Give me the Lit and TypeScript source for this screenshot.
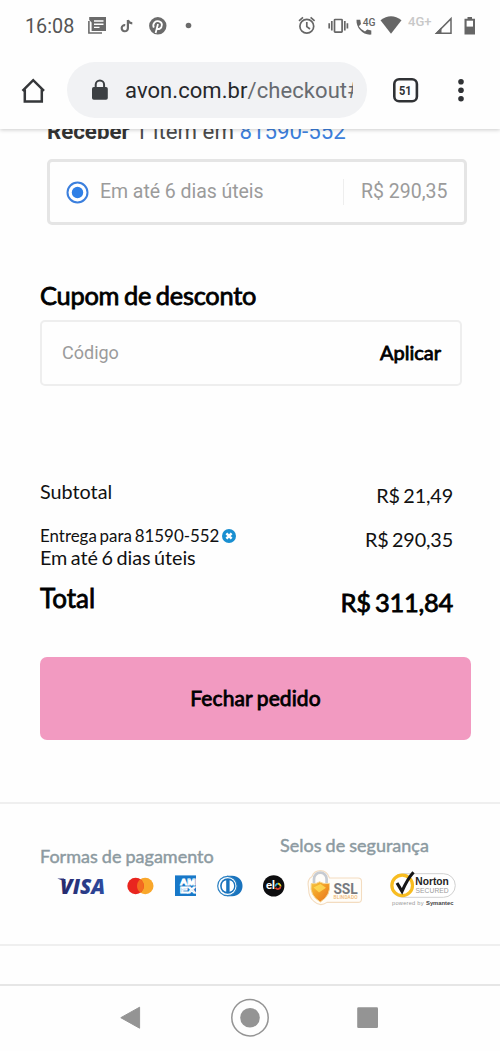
import { LitElement, html, css } from "lit";
import { customElement } from "lit/decorators.js";

@customElement("status-bar")
class StatusBar extends LitElement {
  static styles = css`
    :host { display: block; height: 52px; }
    .bar { display: flex; height: 52px; justify-content: space-between; align-items: center; }
    .clock { font: 400 19.8px/24px Roboto, sans-serif; color: #555; padding: 2px 0 0 25px; width: 57px; white-space: nowrap; }
    .left { display: flex; align-items: center; height: 52px; }
    svg { display: block; }
  `;
  render() {
    return html`<div class="bar">
      <div class="left">
        <span class="clock">16:08</span>
        <svg width="120" height="52" viewBox="82 0 120 52" fill="#6b6b6b">
          <path d="M91.6 17H106V31H91.6V22.4L89.2 20V17Z" />
          <path d="M88.9 21V33H102" fill="none" stroke="#6b6b6b" stroke-width="1.6" />
          <path d="M94 21H103.5M94 24.2H103.5M94 27.4H99.5" stroke="#fff" stroke-width="1.4" />
          <path d="M127.9 20V28.2A3.1 3.1 0 1 1 125.2 25.1M127.9 20Q128.8 23.2 132.3 23.4" fill="none" stroke="#6b6b6b" stroke-width="2.2" />
          <circle cx="157.8" cy="25.8" r="8.7" />
          <path d="M153.8 27.6Q152.4 24.5 154.6 22.3C157 20.1 161.8 21 161.9 24.8C161.8 28.6 158.3 30.2 156.7 28M158 24L155.6 33" fill="none" stroke="#fff" stroke-width="1.8" />
          <circle cx="188.5" cy="25.5" r="2.8" />
        </svg>
      </div>
      <svg width="210" height="52" viewBox="290 0 210 52" fill="#666">
        <g fill="none" stroke="#666" stroke-width="1.7">
          <circle cx="306.8" cy="26.2" r="6.9" />
          <path d="M306.8 22V26.6L310 29M299 20.8L303 17.4M314.6 20.8L310.6 17.4" />
          <rect x="334.5" y="19.5" width="7.6" height="12.6" rx=".6" />
          <path d="M331.8 21V30.6M329.2 23.2V28.4M344.8 21V30.6M347.4 23.2V28.4" />
        </g>
        <path d="M356.5 19.8H360.2L361 24L358.8 26.2Q361 29.8 365 31.6L367.2 29.6L371.3 30.6V34.6C363 35.4 356 28 356.5 19.8Z" />
        <text x="362.8" y="25.8" font-family="Roboto" font-weight="500" font-size="11.5" textLength="12.8" lengthAdjust="spacingAndGlyphs">4G</text>
        <path d="M380.5 20.2Q391 12.4 401.5 20.2L391 33.8Z" />
        <text x="408" y="25.8" font-family="Roboto" font-weight="500" font-size="12" fill="#c8c8c8" textLength="23.5" lengthAdjust="spacingAndGlyphs">4G+</text>
        <path d="M436.5 33.2H451V18.6Z" fill="none" stroke="#666" stroke-width="1.5" />
        <path d="M435 34L441.5 27.2V34Z" />
        <path d="M467.5 17H472V18.8H475V34.5H464.5V18.8H467.5Z" />
        <path d="M466.6 20.7H473V26.6H466.6Z" fill="#fff" />
      </svg>
    </div>`;
  }
}

@customElement("browser-bar")
class BrowserBar extends LitElement {
  static styles = css`
    :host { display: block; }
    .bar { display: flex; height: 77px; padding-top: 10px; box-sizing: border-box; align-items: flex-start; }
    svg { display: block; flex: none; }
    .url { display: flex; width: 300px; height: 56px; border-radius: 28px; background: #f1f2f4; align-items: center; padding-left: 24px; box-sizing: border-box; }
    .address { width: 228px; margin-left: 16px; overflow: hidden; white-space: nowrap; font: 22px/30px Roboto, sans-serif; padding-top: 2px; letter-spacing: .07px; color: #26282b; }
    .path { color: #676b70; }
  `;
  render() {
    return html`<div class="bar">
      <svg width="67" height="56" viewBox="0 62 67 56">
        <path d="M22.5 90.8L33.2 80.2L44 90.8M24.8 89.4V101.5H41.8V89.4" fill="none" stroke="#35373a" stroke-width="2.5" />
      </svg>
      <div class="url">
        <svg width="18" height="56" viewBox="91 62 18 56">
          <rect x="92" y="87" width="15.8" height="12.8" rx="1.8" fill="#3c4043" />
          <path d="M95.7 88V84.7A4.2 4.2 0 0 1 104.1 84.7V88" fill="none" stroke="#3c4043" stroke-width="2" />
        </svg>
        <div class="address">avon.com.br<span class="path">/checkout#</span></div>
      </div>
      <svg width="133" height="56" viewBox="367 62 133 56" fill="#303235">
        <rect x="394.3" y="79.3" width="22.6" height="21.9" rx="4.8" fill="none" stroke="#303235" stroke-width="2.6" />
        <text x="399" y="95" font-family="Roboto" font-weight="700" font-size="13.5" textLength="12.6" lengthAdjust="spacingAndGlyphs">51</text>
        <circle cx="461" cy="81.8" r="2.8" /><circle cx="461" cy="90.3" r="2.8" /><circle cx="461" cy="98.7" r="2.8" />
      </svg>
    </div>`;
  }
}

@customElement("payment-marks")
class PaymentMarks extends LitElement {
  static styles = css`
    :host { display: block; }
    svg { display: block; }
  `;
  render() {
    return html`<svg width="260" height="40" viewBox="40 866 260 40">
      <defs><linearGradient id="v" x2="1"><stop stop-color="#26286b" /><stop offset="1" stop-color="#2d4ba0" /></linearGradient></defs>
      <text x="60" y="893.6" font-family="Open Sans" font-weight="800" font-style="italic" font-size="21" fill="url(#v)" textLength="45" lengthAdjust="spacingAndGlyphs">VISA</text>
      <path d="M57.3 878.6H64L66 883.6Q62 879.8 57.3 878.6Z" fill="#2b2d75" />
      <circle cx="145.2" cy="886" r="8.3" fill="#f9a72b" />
      <circle cx="135.6" cy="886" r="8.3" fill="#e9251f" />
      <path d="M140.4 879.3A8.3 8.3 0 0 1 140.4 892.7A8.3 8.3 0 0 1 140.4 879.3Z" fill="#f36b20" />
      <rect x="175" y="875.4" width="21" height="20.6" fill="#1878c8" />
      <g font-family="Liberation Sans" font-weight="700" font-size="8.4" fill="none" stroke="#fff" stroke-width=".9">
        <text x="180" y="885" textLength="15.5" lengthAdjust="spacingAndGlyphs">AM</text>
        <text x="180" y="893.2" textLength="15.5" lengthAdjust="spacingAndGlyphs">EX</text>
      </g>
      <path d="M227 875.7H232C246 875.7 246 896.2 232 896.2H227Z" fill="#1973bd" />
      <circle cx="227.4" cy="886" r="9.7" fill="#fff" stroke="#2b80c2" stroke-width="1.2" />
      <circle cx="227.8" cy="886" r="7.7" fill="#1973bd" />
      <path d="M226.2 880.2A6 6 0 0 0 226.2 891.8ZM229.6 880.2A6 6 0 0 1 229.6 891.8Z" fill="#fff" />
      <circle cx="273.7" cy="885.9" r="10.7" fill="#0d0d0f" />
      <text x="266" y="889.4" font-family="Lato" font-weight="900" font-size="10.5" fill="#fff" textLength="9" lengthAdjust="spacingAndGlyphs">el</text>
      <g fill="none" stroke-width="1.7"><path d="M275.4 886.5A2.7 2.7 0 0 1 278 883.7" stroke="#31a7dd" /><path d="M278 883.7A2.7 2.7 0 0 1 280.6 886.5" stroke="#eadb27" /><path d="M280.6 886.5A2.7 2.7 0 0 1 275.6 887.7" stroke="#dc4131" /></g>
    </svg>`;
  }
}

@customElement("security-marks")
class SecurityMarks extends LitElement {
  static styles = css`
    :host { display: block; }
    svg { display: block; }
  `;
  render() {
    return html`<svg width="200" height="44" viewBox="300 866 200 44">
      <defs><linearGradient id="s" x2="1" y2="1"><stop stop-color="#f6c840" /><stop offset=".5" stop-color="#f29a25" /><stop offset="1" stop-color="#e5701d" /></linearGradient></defs>
      <path d="M308.6 889.5Q306.5 880.5 312 877.5Q314 871.6 320.5 871.6Q327 871.6 329.5 879H358Q361.5 879 361.5 882.5V900Q361.5 903.4 358 903.4H327Q320 908.4 314 902.4Q308.6 898.4 308.6 889.5Z" fill="#fffdf9" stroke="#f3dcc0" stroke-width="1.1" />
      <path d="M314 885.6V880A6.3 6.3 0 0 1 326.6 880V885.6" fill="none" stroke="#c6cbd2" stroke-width="2.7" />
      <path d="M311.2 884.6Q316 885.6 319.5 882.8Q324 885.6 329.4 884.4Q331.2 896.4 320.3 903Q309.2 896.4 311.2 884.6Z" fill="url(#s)" stroke="#f6d692" />
      <path d="M313.5 888.6L320.5 884.9L326 888.8L319 893.6Z" fill="#ffe35b" opacity=".75" />
      <text x="333.4" y="894.8" font-family="Roboto" font-weight="700" font-size="15" fill="#777a7f" textLength="24.4" lengthAdjust="spacingAndGlyphs">SSL</text>
      <text x="333.5" y="900.4" font-family="Roboto" font-weight="500" font-size="4.8" fill="#efb873" textLength="24">BLINDADO</text>
      <rect x="391" y="874.7" width="64.3" height="23.6" rx="11.8" fill="#fff" stroke="#d1d1d1" stroke-width="1" />
      <circle cx="402.2" cy="886.4" r="10.3" fill="#fff" stroke="#f8bd21" stroke-width="3.2" />
      <path d="M397 884L402 892.4Q407.5 879.8 413.5 873.3" fill="none" stroke="#171717" stroke-width="3.1" />
      <text x="415.3" y="886.4" font-family="Liberation Sans" font-weight="700" font-size="10.5" fill="#242424" textLength="33.5" lengthAdjust="spacingAndGlyphs">Norton</text>
      <text x="415.5" y="893.9" font-family="Liberation Sans" font-size="6.7" fill="#9b9b9b" textLength="33.2">SECURED</text>
      <text x="392" y="905.6" font-family="Liberation Sans" font-size="5.7" fill="#999" textLength="31.5">powered by</text>
      <text x="426" y="905.6" font-family="Liberation Sans" font-weight="700" font-size="5.7" fill="#444" textLength="27.5" lengthAdjust="spacingAndGlyphs">Symantec</text>
    </svg>`;
  }
}

@customElement("app-root")
class AppRoot extends LitElement {
  static styles = css`
    :host { display: block; width: 500px; height: 1051px; overflow: hidden; background: #fefefe; font-family: Lato, sans-serif; color: #111; }
    .page { display: flex; flex-direction: column; height: 1051px; }
    .chrome { flex: none; height: 129px; background: #fefefe; box-shadow: 0 1px 4px rgba(0,0,0,.2); position: relative; z-index: 1; }
    main { flex: none; height: 855px; overflow: hidden; white-space: nowrap; }
    .receive { margin: -12px 0 0 47px; height: 28px; font: 22.25px/28px Roboto, sans-serif; color: #4a4a4a; }
    .receive b { color: #333; }
    .receive a { color: #3c7edb; }
    .option { margin: 14px 33px 0 47px; height: 66px; box-sizing: border-box; border: 3px solid #e5e5e5; border-radius: 5px; display: flex; align-items: center; font: 19.5px/60px Roboto, sans-serif; color: #9b9b9b; padding-left: 15px; }
    .radio { width: 25px; height: 25px; flex: none; margin-right: 10px; }
    .eta { width: 243px; letter-spacing: -.05px; }
    .price { border-left: 1px solid #eee; height: 26px; line-height: 26px; padding-left: 17px; }
    h2 { margin: 57px 0 0 40px; height: 27px; font-size: 25.4px; line-height: 27px; font-weight: 400; letter-spacing: -.25px; word-spacing: -1.5px; }
    .strong { -webkit-text-stroke: .8px #000; color: #000; }
    .coupon { margin: 11px 38px 0 40px; height: 66px; box-sizing: border-box; border: 2px solid #eee; border-radius: 5px; display: flex; align-items: center; justify-content: space-between; padding: 0 19px 0 20px; }
    .code { font: 18px/20px Roboto, sans-serif; color: #9b9b9b; }
    .apply { font-size: 20px; line-height: 24px; padding-bottom: 2px; }
    .totals { display: flex; justify-content: space-between; margin: 92px 47px 0 40px; height: 179px; font-size: 19.8px; word-spacing: -1.5px; }
    .labels, .values { display: flex; flex-direction: column; }
    .values { align-items: flex-end; padding-top: 4px; letter-spacing: -.15px; word-spacing: -1.4px; }
    .line { height: 26px; line-height: 26px; }
    .small { font-size: 16.9px; height: 22px; line-height: 22px; margin-top: 21px; display: flex; align-items: center; gap: 3px; }
    .small svg { display: block; }
    .time { height: 22px; line-height: 21px; letter-spacing: -.04px; }
    .total { height: 32px; line-height: 32px; font-size: 26px; margin-top: 13px; }
    .fee { margin-top: 18px; }
    .sum { margin-top: 34px; height: 32px; line-height: 32px; font-size: 25.5px; letter-spacing: -.3px; word-spacing: -1.8px; }
    .order { display: block; margin: 0 29px 0 40px; width: 431px; height: 83px; border: 0; padding: 0 0 2px; border-radius: 7px; background: #f29ac1; font: 21px/81px Lato, sans-serif; letter-spacing: .1px; word-spacing: -1px; }
    .seals { margin-top: 62px; height: 140px; border-top: 2px solid #efefef; border-bottom: 2px solid #efefef; display: flex; }
    .pay { width: 300px; padding: 42px 0 0 40px; box-sizing: border-box; }
    .caption { font-size: 18px; line-height: 20px; height: 20px; color: #8c9aa1; -webkit-text-stroke: .45px #8c9aa1; word-spacing: -.5px; }
    .safe { flex: 1; padding-top: 31px; }
    .safe .caption { margin-left: -20px; }
    .safe security-marks { margin-top: 10px; }
    nav { flex: none; height: 67px; border-top: 2px solid #e6e6e6; box-sizing: border-box; }
    nav svg { display: block; }
  `;
  render() {
    return html`<div class="page">
      <header class="chrome"><status-bar></status-bar><browser-bar></browser-bar></header>
      <main>
        <div class="receive"><b>Receber</b> 1 item em <a>81590-552</a></div>
        <div class="option">
          <svg class="radio" viewBox="-.5 -.5 25 25"><circle cx="12" cy="12" r="10" fill="#fff" stroke="#3b7fdd" stroke-width="2" /><circle cx="12" cy="12" r="5.7" fill="#2f7fe6" /></svg>
          <span class="eta">Em até 6 dias úteis</span><span class="price">R$ 290,35</span>
        </div>
        <h2 class="strong">Cupom de desconto</h2>
        <div class="coupon"><span class="code">Código</span><span class="apply strong">Aplicar</span></div>
        <div class="totals">
          <div class="labels">
            <div class="line">Subtotal</div>
            <div class="small">Entrega para 81590-552
              <svg width="14" height="14" viewBox="0 0 14 14"><circle cx="7" cy="7" r="7" fill="#198fd1" /><path d="M4.4 4.4L9.6 9.6M9.6 4.4L4.4 9.6" stroke="#fff" stroke-width="2.5" /></svg>
            </div>
            <div class="time">Em até 6 dias úteis</div>
            <div class="total strong">Total</div>
          </div>
          <div class="values">
            <div class="line">R$ 21,49</div>
            <div class="line fee">R$ 290,35</div>
            <div class="sum strong">R$ 311,84</div>
          </div>
        </div>
        <button class="order strong">Fechar pedido</button>
        <section class="seals">
          <div class="pay"><div class="caption">Formas de pagamento</div><payment-marks></payment-marks></div>
          <div class="safe"><div class="caption">Selos de segurança</div><security-marks></security-marks></div>
        </section>
      </main>
      <nav><svg width="500" height="65" viewBox="0 986 500 65" fill="#949494">
        <path d="M120.8 1017.7L139.6 1007.2V1028.2Z" stroke="#949494" stroke-linejoin="round" />
        <circle cx="250" cy="1017.7" r="18.2" fill="none" stroke="#949494" stroke-width="1.5" /><circle cx="250" cy="1017.7" r="9.8" />
        <rect x="357.2" y="1007.2" width="20.8" height="20.8" rx="1.3" />
      </svg></nav>
    </div>`;
  }
}
